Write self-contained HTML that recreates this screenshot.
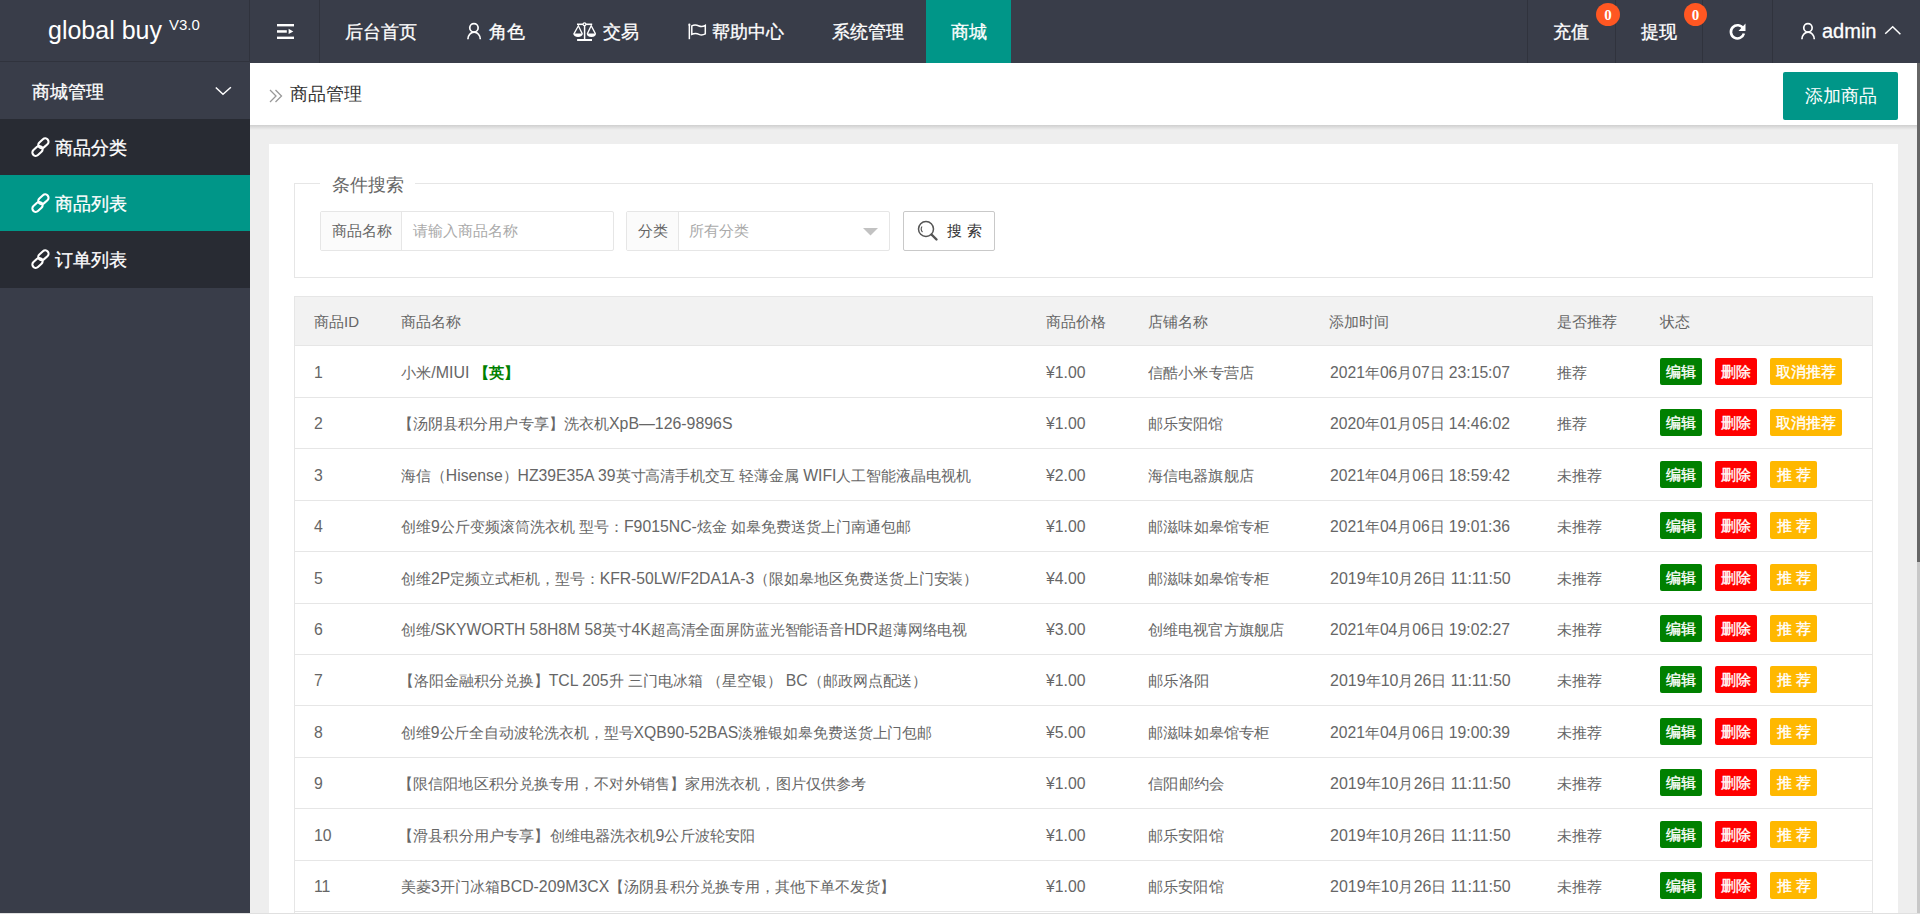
<!DOCTYPE html>
<html><head><meta charset="utf-8">
<style>
*{box-sizing:border-box;margin:0;padding:0}
html,body{width:1920px;height:914px;overflow:hidden;background:#eeeeee;font-family:"Liberation Sans",sans-serif;}
.a{position:absolute;white-space:nowrap}
#hd{position:absolute;left:0;top:0;width:1920px;height:63px;background:#393D49}
.vs{position:absolute;top:0;width:1px;height:63px;background:#30333d}
.wt{color:#fff;font-size:18px;line-height:20px;-webkit-text-stroke:0.3px #fff}
#side{position:absolute;left:0;top:62px;width:250px;height:852px;background:#393D49}
.sub{position:absolute;left:0;width:250px;height:56px;background:#282B33}
#crumb{position:absolute;left:250px;top:63px;width:1667px;height:62px;background:#fff}
#crsh{position:absolute;left:250px;top:125px;width:1667px;height:5px;background:linear-gradient(rgba(0,0,0,.13),rgba(0,0,0,0))}
#card{position:absolute;left:269px;top:144px;width:1629px;height:800px;background:#fff}
.btn{position:absolute;height:27px;line-height:27px;color:#fff;font-size:15px;border-radius:2px;text-align:center;-webkit-text-stroke:0.35px #fff}
.g{background:#008000}.r{background:#FF0000}.y{background:#FFB800}
.td{position:absolute;color:#666;font-size:15px;line-height:20px;transform-origin:0 50%}
.l{font-size:15.8px}
.hl{position:absolute;left:294px;width:1579px;height:1px;background:#e6e6e6}
</style></head><body>
<div id="hd">
  <div class="a" style="left:0;top:61px;width:249px;height:1px;background:#30333d"></div>
  <div class="vs" style="left:249px"></div>
  <div class="a" style="left:48px;top:16px;color:#fff;font-size:25px;line-height:28px">global buy</div>
  <div class="a" style="left:169px;top:16px;color:#fff;font-size:15px;line-height:17px">V3.0</div>
  <div class="vs" style="left:319px"></div>
  <!-- hamburger -->
  <svg class="a" style="left:277px;top:24px" width="17" height="15" viewBox="0 0 17 15">
    <rect x="0" y="0" width="17" height="2.4" fill="#fff"/>
    <rect x="0" y="6.2" width="9.8" height="2.5" fill="#fff"/>
    <path d="M11.6 4.7 L16.3 7.4 L11.6 10.1Z" fill="#fff"/>
    <rect x="0" y="12.6" width="17" height="2.4" fill="#fff"/>
  </svg>
  <div class="a wt" style="left:345px;top:22px">后台首页</div>
  <svg class="a" style="left:460px;top:16px" width="30" height="30" viewBox="0 0 30 30" fill="none" stroke="#fff" stroke-width="1.7">
    <circle cx="13.95" cy="11.8" r="4.2"/><path d="M7.9 23.2 A6.2 7 0 0 1 20.3 23.2"/>
  </svg>
  <div class="a wt" style="left:489px;top:22px">角色</div>
  <svg class="a" style="left:565px;top:16px" width="40" height="30" viewBox="0 0 40 30" fill="none" stroke="#fff">
    <path d="M12 8.3 H27.2" stroke-width="1.6"/>
    <circle cx="19.5" cy="8.2" r="1.4" stroke-width="1.2" fill="#393D49"/>
    <path d="M19.6 9.6 V23.5" stroke-width="1.5"/>
    <rect x="12.1" y="23" width="14.9" height="2" fill="#fff" stroke="none"/>
    <path d="M8.9 17.9 L13.4 9.8 L17.3 17.9" stroke-width="1.3"/>
    <path d="M8.2 17.6 H17.9 A4.85 3.4 0 0 1 8.2 17.6 Z" fill="#fff" stroke="none"/>
    <path d="M22.3 17.9 L26.2 9.8 L30.5 17.9" stroke-width="1.3"/>
    <path d="M21.8 17.6 H31 A4.6 3.4 0 0 1 21.8 17.6 Z" fill="#fff" stroke="none"/>
  </svg>
  <div class="a wt" style="left:603px;top:22px">交易</div>
  <svg class="a" style="left:680px;top:16px" width="40" height="30" viewBox="0 0 40 30" fill="none" stroke="#fff" stroke-width="1.5">
    <path d="M9.35 9 V23.2"/><circle cx="9.35" cy="8.7" r="1.1" fill="#fff" stroke="none"/>
    <path d="M11.8 9.9 C14.2 8.7 16.5 8.9 19 10 C21 10.9 23 10.7 25.3 9.4 V17.9 C23 19.1 21 19.3 19 18.3 C16.5 17.1 14.2 17.2 11.8 18.4 Z"/>
  </svg>
  <div class="a wt" style="left:712px;top:22px">帮助中心</div>
  <div class="a wt" style="left:832px;top:22px">系统管理</div>
  <div class="a" style="left:926px;top:0;width:85px;height:63px;background:#009688"></div>
  <div class="a wt" style="left:951px;top:22px">商城</div>

  <div class="vs" style="left:1527px"></div>
  <div class="vs" style="left:1615px"></div>
  <div class="vs" style="left:1702px"></div>
  <div class="vs" style="left:1772px"></div>
  <div class="a wt" style="left:1553px;top:22px">充值</div>
  <div class="a" style="left:1596px;top:3px;width:24px;height:23px;border-radius:50%;background:#FF5722;color:#fff;font-family:'Liberation Serif',serif;font-weight:bold;font-size:15px;line-height:24px;text-align:center">0</div>
  <div class="a wt" style="left:1641px;top:22px">提现</div>
  <div class="a" style="left:1684px;top:3px;width:23px;height:23px;border-radius:50%;background:#FF5722;color:#fff;font-family:'Liberation Serif',serif;font-weight:bold;font-size:15px;line-height:24px;text-align:center">0</div>
  <svg class="a" style="left:1728px;top:22px" width="19" height="19" viewBox="0 0 19 19">
    <path d="M15.2 6.5 A6.6 6.6 0 1 0 15.9 11.5" fill="none" stroke="#fff" stroke-width="2.6"/>
    <path d="M17.5 1.5 L17.5 9 L10.5 9 Z" fill="#fff"/>
  </svg>
  <svg class="a" style="left:1793.75px;top:16px" width="30" height="30" viewBox="0 0 30 30" fill="none" stroke="#fff" stroke-width="1.7">
    <circle cx="13.95" cy="11.8" r="4.2"/><path d="M7.9 23.2 A6.2 7 0 0 1 20.3 23.2"/>
  </svg>
  <div class="a" style="left:1822px;top:19px;color:#fff;font-size:20px;line-height:24px;-webkit-text-stroke:0.3px #fff">admin</div>
  <svg class="a" style="left:1884px;top:25px" width="18" height="11" viewBox="0 0 18 11" fill="none" stroke="#fff" stroke-width="1.5">
    <path d="M1.2 8.7 L8.7 1.8 L16.4 9.2"/>
  </svg>
</div>

<div id="side">
  <div class="a wt" style="left:32px;top:20px;font-size:17.5px">商城管理</div>
  <svg class="a" style="left:215px;top:24px" width="17" height="11" viewBox="0 0 17 11" fill="none" stroke="#fff" stroke-width="1.5">
    <path d="M0.8 1.5 L8 8.3 L15.9 1.3"/>
  </svg>
  <div class="sub" style="top:57px"></div>
  <div class="sub" style="top:113px;background:#009688"></div>
  <div class="sub" style="top:169px;height:57px"></div>
  <svg class="a" style="left:28px;top:72px" width="26" height="26" viewBox="0 0 26 26" fill="none" stroke="#fff" stroke-width="2.1">
    <rect x="9.65" y="5.95" width="11.50" height="6.70" rx="3.35" transform="rotate(-42 15.4 9.3)"/>
    <rect x="3.75" y="13.55" width="11.50" height="6.70" rx="3.35" transform="rotate(-42 9.5 16.9)"/>
  </svg>
  <div class="a wt" style="left:55px;top:76px;font-size:17.5px">商品分类</div>
  <svg class="a" style="left:28px;top:128px" width="26" height="26" viewBox="0 0 26 26" fill="none" stroke="#fff" stroke-width="2.1">
    <rect x="9.65" y="5.95" width="11.50" height="6.70" rx="3.35" transform="rotate(-42 15.4 9.3)"/>
    <rect x="3.75" y="13.55" width="11.50" height="6.70" rx="3.35" transform="rotate(-42 9.5 16.9)"/>
  </svg>
  <div class="a wt" style="left:55px;top:132px;font-size:17.5px">商品列表</div>
  <svg class="a" style="left:28px;top:184px" width="26" height="26" viewBox="0 0 26 26" fill="none" stroke="#fff" stroke-width="2.1">
    <rect x="9.65" y="5.95" width="11.50" height="6.70" rx="3.35" transform="rotate(-42 15.4 9.3)"/>
    <rect x="3.75" y="13.55" width="11.50" height="6.70" rx="3.35" transform="rotate(-42 9.5 16.9)"/>
  </svg>
  <div class="a wt" style="left:55px;top:188px;font-size:17.5px">订单列表</div>

</div>


<div id="crumb">
  <svg class="a" style="left:19px;top:26px" width="14" height="14" viewBox="0 0 14 14" fill="none" stroke="#999" stroke-width="1.3">
    <path d="M1 1 L7 7 L1 13"/><path d="M6.5 1 L12.5 7 L6.5 13"/>
  </svg>
  <div class="a" style="left:40px;top:21px;color:#333;font-size:18px;line-height:20px">商品管理</div>
  <div class="a" style="left:1533px;top:9px;width:115px;height:48px;background:#009688;border-radius:2px;color:#fff;font-size:18px;line-height:48px;text-align:center">添加商品</div>
</div>
<div id="crsh"></div>
<div id="card"></div>
<!-- fieldset -->
<div class="a" style="left:294px;top:183px;width:1579px;height:95px;border:1px solid #e6e6e6;border-radius:0"></div>
<div class="a" style="left:320px;top:172px;width:95px;height:24px;background:#fff"></div>
<div class="a" style="left:332px;top:174px;color:#666;font-size:18px;line-height:22px">条件搜索</div>
<!-- input 1 -->
<div class="a" style="left:320px;top:211px;width:294px;height:40px;border:1px solid #e6e6e6;border-radius:2px;background:#fff"></div>
<div class="a" style="left:321px;top:212px;width:81px;height:38px;background:#FBFBFB;border-right:1px solid #e6e6e6"></div>
<div class="a" style="left:332px;top:221px;color:#666;font-size:15px;line-height:20px">商品名称</div>
<div class="a" style="left:413px;top:221px;color:#aaa;font-size:15px;line-height:20px">请输入商品名称</div>
<!-- input 2 -->
<div class="a" style="left:626px;top:211px;width:264px;height:40px;border:1px solid #e6e6e6;border-radius:2px;background:#fff"></div>
<div class="a" style="left:627px;top:212px;width:52px;height:38px;background:#FBFBFB;border-right:1px solid #e6e6e6"></div>
<div class="a" style="left:638px;top:221px;color:#666;font-size:15px;line-height:20px">分类</div>
<div class="a" style="left:689px;top:221px;color:#aaa;font-size:15px;line-height:20px">所有分类</div>
<svg class="a" style="left:863px;top:228px" width="15" height="8" viewBox="0 0 15 8"><path d="M0 0 H15 L7.5 7.5Z" fill="#c2c2c2"/></svg>
<!-- search btn -->
<div class="a" style="left:903px;top:211px;width:92px;height:40px;border:1px solid #c9c9c9;border-radius:2px;background:#fff"></div>
<svg class="a" style="left:917px;top:220px" width="22" height="22" viewBox="0 0 22 22" fill="none" stroke="#555" stroke-width="1.5">
  <circle cx="9" cy="9" r="7.5"/><path d="M5 6.5 A4.5 4.5 0 0 0 5.5 12" stroke-width="1.1"/><path d="M14.5 14.5 L19.5 19.5" stroke-width="2.4" stroke-linecap="round"/>
</svg>
<div class="a" style="left:947px;top:221px;color:#333;font-size:15px;line-height:20px;letter-spacing:5px">搜索</div>
<!-- table -->
<div class="a" style="left:294px;top:296px;width:1579px;height:620px;border:1px solid #e6e6e6;border-bottom:none;background:#fff"></div>
<div class="a" style="left:295px;top:297px;width:1577px;height:48px;background:#f2f2f2"></div>
<div class="hl" style="top:345px"></div>
<div class="td" style="left:314px;top:312px">商品ID</div>
<div class="td" style="left:401px;top:312px">商品名称</div>
<div class="td" style="left:1046px;top:312px">商品价格</div>
<div class="td" style="left:1148px;top:312px">店铺名称</div>
<div class="td" style="left:1329px;top:312px">添加时间</div>
<div class="td" style="left:1557px;top:312px">是否推荐</div>
<div class="td" style="left:1660px;top:312px">状态</div>
<!--ROWS-->
<div class="hl" style="top:397px"></div>
<div class="td" id="id0" style="left:314.00px;top:362.5px"><span class="l">1</span></div>
<div class="td" id="nm0" style="left:401.00px;top:362.5px;transform:scaleX(1.0093)">小米<span class="l">/MIUI</span> <b style="color:#008000">【英】</b></div>
<div class="td" id="pr0" style="left:1046.00px;top:362.5px"><span class="l">¥1.00</span></div>
<div class="td" id="sh0" style="left:1148.00px;top:362.5px;transform:scaleX(1.0096)">信酷小米专营店</div>
<div class="td" id="tm0" style="left:1329.50px;top:362.5px;transform:scaleX(0.9944)"><span class="l">2021</span>年<span class="l">06</span>月<span class="l">07</span>日 <span class="l">23:15:07</span></div>
<div class="td" id="rc0" style="left:1557.00px;top:362.5px">推荐</div>
<div class="btn g" style="left:1660px;top:357.5px;width:42px">编辑</div>
<div class="btn r" style="left:1715px;top:357.5px;width:42px">删除</div>
<div class="btn y" style="left:1770px;top:357.5px;width:72px">取消推荐</div>
<div class="hl" style="top:448px"></div>
<div class="td" id="id1" style="left:314.00px;top:414.0px"><span class="l">2</span></div>
<div class="td" id="nm1" style="left:398.46px;top:414.0px;transform:scaleX(1.0046)">【汤阴县积分用户专享】洗衣机<span class="l">XpB—126-9896S</span></div>
<div class="td" id="pr1" style="left:1046.00px;top:414.0px"><span class="l">¥1.00</span></div>
<div class="td" id="sh1" style="left:1148.00px;top:414.0px;transform:scaleX(1.0068)">邮乐安阳馆</div>
<div class="td" id="tm1" style="left:1329.50px;top:414.0px;transform:scaleX(0.9944)"><span class="l">2020</span>年<span class="l">01</span>月<span class="l">05</span>日 <span class="l">14:46:02</span></div>
<div class="td" id="rc1" style="left:1557.00px;top:414.0px">推荐</div>
<div class="btn g" style="left:1660px;top:409.0px;width:42px">编辑</div>
<div class="btn r" style="left:1715px;top:409.0px;width:42px">删除</div>
<div class="btn y" style="left:1770px;top:409.0px;width:72px">取消推荐</div>
<div class="hl" style="top:500px"></div>
<div class="td" id="id2" style="left:314.00px;top:465.5px"><span class="l">3</span></div>
<div class="td" id="nm2" style="left:401.00px;top:465.5px;transform:scaleX(0.9960)">海信（<span class="l">Hisense</span>）<span class="l">HZ39E35A 39</span>英寸高清手机交互 轻薄金属 <span class="l">WIFI</span>人工智能液晶电视机</div>
<div class="td" id="pr2" style="left:1046.00px;top:465.5px"><span class="l">¥2.00</span></div>
<div class="td" id="sh2" style="left:1148.00px;top:465.5px;transform:scaleX(1.0067)">海信电器旗舰店</div>
<div class="td" id="tm2" style="left:1329.50px;top:465.5px;transform:scaleX(0.9944)"><span class="l">2021</span>年<span class="l">04</span>月<span class="l">06</span>日 <span class="l">18:59:42</span></div>
<div class="td" id="rc2" style="left:1557.00px;top:465.5px">未推荐</div>
<div class="btn g" style="left:1660px;top:460.5px;width:42px">编辑</div>
<div class="btn r" style="left:1715px;top:460.5px;width:42px">删除</div>
<div class="btn y" style="left:1770px;top:460.5px;width:47px;letter-spacing:4px;text-indent:4px">推荐</div>
<div class="hl" style="top:551px"></div>
<div class="td" id="id3" style="left:314.00px;top:517.0px"><span class="l">4</span></div>
<div class="td" id="nm3" style="left:401.00px;top:517.0px">创维<span class="l">9</span>公斤变频滚筒洗衣机 型号：<span class="l">F9015NC-</span>炫金 如皋免费送货上门南通包邮</div>
<div class="td" id="pr3" style="left:1046.00px;top:517.0px"><span class="l">¥1.00</span></div>
<div class="td" id="sh3" style="left:1148.00px;top:517.0px;transform:scaleX(1.0118)">邮滋味如皋馆专柜</div>
<div class="td" id="tm3" style="left:1329.50px;top:517.0px;transform:scaleX(0.9944)"><span class="l">2021</span>年<span class="l">04</span>月<span class="l">06</span>日 <span class="l">19:01:36</span></div>
<div class="td" id="rc3" style="left:1557.00px;top:517.0px">未推荐</div>
<div class="btn g" style="left:1660px;top:512.0px;width:42px">编辑</div>
<div class="btn r" style="left:1715px;top:512.0px;width:42px">删除</div>
<div class="btn y" style="left:1770px;top:512.0px;width:47px;letter-spacing:4px;text-indent:4px">推荐</div>
<div class="hl" style="top:603px"></div>
<div class="td" id="id4" style="left:314.00px;top:568.5px"><span class="l">5</span></div>
<div class="td" id="nm4" style="left:401.00px;top:568.5px;transform:scaleX(0.9965)">创维<span class="l">2P</span>定频立式柜机，型号：<span class="l">KFR-50LW/F2DA1A-3</span>（限如皋地区免费送货上门安装）</div>
<div class="td" id="pr4" style="left:1046.00px;top:568.5px"><span class="l">¥4.00</span></div>
<div class="td" id="sh4" style="left:1148.00px;top:568.5px;transform:scaleX(1.0118)">邮滋味如皋馆专柜</div>
<div class="td" id="tm4" style="left:1329.50px;top:568.5px;transform:scaleX(1.0113)"><span class="l">2019</span>年<span class="l">10</span>月<span class="l">26</span>日 <span class="l">11:11:50</span></div>
<div class="td" id="rc4" style="left:1557.00px;top:568.5px">未推荐</div>
<div class="btn g" style="left:1660px;top:563.5px;width:42px">编辑</div>
<div class="btn r" style="left:1715px;top:563.5px;width:42px">删除</div>
<div class="btn y" style="left:1770px;top:563.5px;width:47px;letter-spacing:4px;text-indent:4px">推荐</div>
<div class="hl" style="top:654px"></div>
<div class="td" id="id5" style="left:314.00px;top:620.0px"><span class="l">6</span></div>
<div class="td" id="nm5" style="left:401.00px;top:620.0px;transform:scaleX(0.9912)">创维<span class="l">/SKYWORTH 58H8M 58</span>英寸<span class="l">4K</span>超高清全面屏防蓝光智能语音<span class="l">HDR</span>超薄网络电视</div>
<div class="td" id="pr5" style="left:1046.00px;top:620.0px"><span class="l">¥3.00</span></div>
<div class="td" id="sh5" style="left:1148.00px;top:620.0px;transform:scaleX(1.0075)">创维电视官方旗舰店</div>
<div class="td" id="tm5" style="left:1329.50px;top:620.0px;transform:scaleX(0.9944)"><span class="l">2021</span>年<span class="l">04</span>月<span class="l">06</span>日 <span class="l">19:02:27</span></div>
<div class="td" id="rc5" style="left:1557.00px;top:620.0px">未推荐</div>
<div class="btn g" style="left:1660px;top:615.0px;width:42px">编辑</div>
<div class="btn r" style="left:1715px;top:615.0px;width:42px">删除</div>
<div class="btn y" style="left:1770px;top:615.0px;width:47px;letter-spacing:4px;text-indent:4px">推荐</div>
<div class="hl" style="top:705px"></div>
<div class="td" id="id6" style="left:314.00px;top:671.0px"><span class="l">7</span></div>
<div class="td" id="nm6" style="left:398.52px;top:671.0px;transform:scaleX(0.9980)">【洛阳金融积分兑换】<span class="l">TCL 205</span>升 三门电冰箱 （星空银） <span class="l">BC</span>（邮政网点配送）</div>
<div class="td" id="pr6" style="left:1046.00px;top:671.0px"><span class="l">¥1.00</span></div>
<div class="td" id="sh6" style="left:1148.00px;top:671.0px;transform:scaleX(1.0259)">邮乐洛阳</div>
<div class="td" id="tm6" style="left:1329.50px;top:671.0px;transform:scaleX(1.0113)"><span class="l">2019</span>年<span class="l">10</span>月<span class="l">26</span>日 <span class="l">11:11:50</span></div>
<div class="td" id="rc6" style="left:1557.00px;top:671.0px">未推荐</div>
<div class="btn g" style="left:1660px;top:666.0px;width:42px">编辑</div>
<div class="btn r" style="left:1715px;top:666.0px;width:42px">删除</div>
<div class="btn y" style="left:1770px;top:666.0px;width:47px;letter-spacing:4px;text-indent:4px">推荐</div>
<div class="hl" style="top:757px"></div>
<div class="td" id="id7" style="left:314.00px;top:722.5px"><span class="l">8</span></div>
<div class="td" id="nm7" style="left:401.00px;top:722.5px;transform:scaleX(0.9944)">创维<span class="l">9</span>公斤全自动波轮洗衣机，型号<span class="l">XQB90-52BAS</span>淡雅银如皋免费送货上门包邮</div>
<div class="td" id="pr7" style="left:1046.00px;top:722.5px"><span class="l">¥5.00</span></div>
<div class="td" id="sh7" style="left:1148.00px;top:722.5px;transform:scaleX(1.0118)">邮滋味如皋馆专柜</div>
<div class="td" id="tm7" style="left:1329.50px;top:722.5px;transform:scaleX(0.9944)"><span class="l">2021</span>年<span class="l">04</span>月<span class="l">06</span>日 <span class="l">19:00:39</span></div>
<div class="td" id="rc7" style="left:1557.00px;top:722.5px">未推荐</div>
<div class="btn g" style="left:1660px;top:717.5px;width:42px">编辑</div>
<div class="btn r" style="left:1715px;top:717.5px;width:42px">删除</div>
<div class="btn y" style="left:1770px;top:717.5px;width:47px;letter-spacing:4px;text-indent:4px">推荐</div>
<div class="hl" style="top:808px"></div>
<div class="td" id="id8" style="left:314.00px;top:774.0px"><span class="l">9</span></div>
<div class="td" id="nm8" style="left:398.44px;top:774.0px;transform:scaleX(1.0068)">【限信阳地区积分兑换专用，不对外销售】家用洗衣机，图片仅供参考</div>
<div class="td" id="pr8" style="left:1046.00px;top:774.0px"><span class="l">¥1.00</span></div>
<div class="td" id="sh8" style="left:1148.00px;top:774.0px;transform:scaleX(1.0243)">信阳邮约会</div>
<div class="td" id="tm8" style="left:1329.50px;top:774.0px;transform:scaleX(1.0113)"><span class="l">2019</span>年<span class="l">10</span>月<span class="l">26</span>日 <span class="l">11:11:50</span></div>
<div class="td" id="rc8" style="left:1557.00px;top:774.0px">未推荐</div>
<div class="btn g" style="left:1660px;top:769.0px;width:42px">编辑</div>
<div class="btn r" style="left:1715px;top:769.0px;width:42px">删除</div>
<div class="btn y" style="left:1770px;top:769.0px;width:47px;letter-spacing:4px;text-indent:4px">推荐</div>
<div class="hl" style="top:860px"></div>
<div class="td" id="id9" style="left:314.00px;top:825.5px"><span class="l">10</span></div>
<div class="td" id="nm9" style="left:398.41px;top:825.5px;transform:scaleX(1.0102)">【滑县积分用户专享】创维电器洗衣机<span class="l">9</span>公斤波轮安阳</div>
<div class="td" id="pr9" style="left:1046.00px;top:825.5px"><span class="l">¥1.00</span></div>
<div class="td" id="sh9" style="left:1148.00px;top:825.5px;transform:scaleX(1.0095)">邮乐安阳馆</div>
<div class="td" id="tm9" style="left:1329.50px;top:825.5px;transform:scaleX(1.0113)"><span class="l">2019</span>年<span class="l">10</span>月<span class="l">26</span>日 <span class="l">11:11:50</span></div>
<div class="td" id="rc9" style="left:1557.00px;top:825.5px">未推荐</div>
<div class="btn g" style="left:1660px;top:820.5px;width:42px">编辑</div>
<div class="btn r" style="left:1715px;top:820.5px;width:42px">删除</div>
<div class="btn y" style="left:1770px;top:820.5px;width:47px;letter-spacing:4px;text-indent:4px">推荐</div>
<div class="hl" style="top:911px"></div>
<div class="td" id="id10" style="left:314.00px;top:877.0px"><span class="l">11</span></div>
<div class="td" id="nm10" style="left:401.00px;top:877.0px;transform:scaleX(1.0033)">美菱<span class="l">3</span>开门冰箱<span class="l">BCD-209M3CX</span>【汤阴县积分兑换专用，其他下单不发货】</div>
<div class="td" id="pr10" style="left:1046.00px;top:877.0px"><span class="l">¥1.00</span></div>
<div class="td" id="sh10" style="left:1148.00px;top:877.0px;transform:scaleX(1.0095)">邮乐安阳馆</div>
<div class="td" id="tm10" style="left:1329.50px;top:877.0px;transform:scaleX(1.0113)"><span class="l">2019</span>年<span class="l">10</span>月<span class="l">26</span>日 <span class="l">11:11:50</span></div>
<div class="td" id="rc10" style="left:1557.00px;top:877.0px">未推荐</div>
<div class="btn g" style="left:1660px;top:872.0px;width:42px">编辑</div>
<div class="btn r" style="left:1715px;top:872.0px;width:42px">删除</div>
<div class="btn y" style="left:1770px;top:872.0px;width:47px;letter-spacing:4px;text-indent:4px">推荐</div>
<!--/ROWS-->

<!-- scrollbar -->
<div class="a" style="left:1917px;top:63px;width:3px;height:851px;background:#c8c8c8"></div>
<div class="a" style="left:1917px;top:63px;width:3px;height:499px;background:#666"></div>
<div class="a" style="left:0;top:913px;width:1920px;height:1px;background:#e0e0e0"></div>
</body></html>
